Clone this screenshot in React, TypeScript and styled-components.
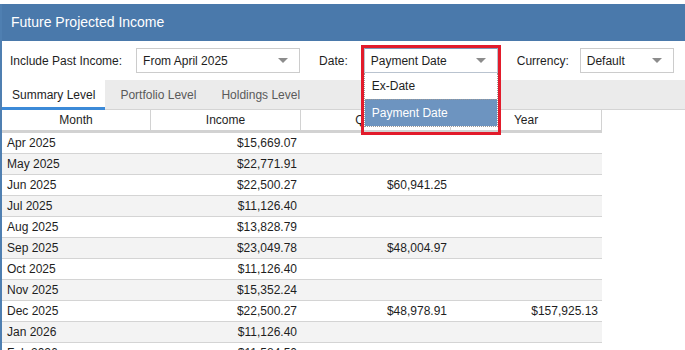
import React from 'react';
import styled, { createGlobalStyle } from 'styled-components';

const GlobalStyle = createGlobalStyle`
  html, body {
    margin: 0;
    padding: 0;
    background: #ffffff;
  }
  body {
    font-family: "Liberation Sans", Arial, sans-serif;
    font-size: 12px;
    color: #1e1e1e;
  }
`;

const Panel = styled.div`
  margin-top: 4px;
  border-left: 2px solid #4f7fb1;
  height: 346px;
  overflow: hidden;
`;

const Header = styled.div`
  height: 37px;
  line-height: 37px;
  background: #4a79ab;
  color: #ffffff;
  font-size: 14px;
  margin-left: -2px;
  padding-left: 11px;
`;

const FilterBar = styled.div`
  display: flex;
  align-items: center;
  height: 39px;
  padding-left: 8px;
`;

const Label = styled.span<{ $gap: number }>`
  margin-right: ${(p) => p.$gap}px;
  white-space: nowrap;
`;

const SelectBox = styled.div<{ $width: number; $open?: boolean; $after: number }>`
  position: relative;
  box-sizing: border-box;
  display: flex;
  align-items: center;
  justify-content: space-between;
  width: ${(p) => p.$width}px;
  height: 25px;
  padding: 0 11px 0 6px;
  margin-right: ${(p) => p.$after}px;
  border: 1px solid ${(p) => (p.$open ? '#b9c3cf' : '#cccccc')};
  border-top-color: ${(p) => (p.$open ? '#7f99b8' : '#cccccc')};
  background: #ffffff;
  z-index: ${(p) => (p.$open ? 5 : 1)};
`;

const Caret = styled.span`
  width: 0;
  height: 0;
  border-left: 5px solid transparent;
  border-right: 5px solid transparent;
  border-top: 5px solid #8c8c8c;
`;

const DropList = styled.div`
  position: absolute;
  top: calc(100% + 1px);
  left: -1px;
  right: -1px;
  border: 1px dotted #9a9a9a;
  border-top: none;
  background: #ffffff;
`;

const DropItem = styled.div<{ $selected?: boolean }>`
  height: 26px;
  line-height: 26px;
  padding-left: 7px;
  background: ${(p) => (p.$selected ? '#6d94c0' : '#ffffff')};
  color: ${(p) => (p.$selected ? '#ffffff' : '#1e1e1e')};
  border-top: ${(p) => (p.$selected ? '1px dotted #9a9a9a' : 'none')};
`;

const Highlight = styled.div`
  position: absolute;
  left: -4px;
  right: -4px;
  top: -4px;
  height: 84px;
  border: 3px solid #e21b2b;
  pointer-events: none;
`;

const TabBar = styled.div`
  display: flex;
  gap: 5px;
  height: 30px;
  background: #ebebeb;
  border-bottom: 1px solid #d4d4d4;
  box-sizing: border-box;
`;

const Tab = styled.div<{ $active?: boolean }>`
  display: flex;
  align-items: center;
  padding: 0 10px;
  box-sizing: border-box;
  height: ${(p) => (p.$active ? '30px' : '29px')};
  background: ${(p) => (p.$active ? '#ffffff' : 'transparent')};
  color: ${(p) => (p.$active ? '#1e1e1e' : '#5a5a5a')};
  border-bottom: ${(p) => (p.$active ? '3px solid #3c8ad8' : 'none')};
  padding-top: ${(p) => (p.$active ? '2px' : '0')};
`;

const Table = styled.div`
  width: 600px;
`;

const HeadRow = styled.div`
  display: grid;
  grid-template-columns: 149px 150px 150px 151px;
  height: 20px;
  border-bottom: 3px solid #d2d2d2;
`;

const HeadCell = styled.div`
  display: flex;
  align-items: center;
  justify-content: center;
  border-right: 1px solid #d2d2d2;
`;

const Row = styled.div<{ $alt: boolean }>`
  display: grid;
  grid-template-columns: 149px 150px 150px 151px;
  height: 20px;
  border-bottom: 1px solid #d4d4d4;
  background: ${(p) => (p.$alt ? '#f3f3f3' : '#ffffff')};
`;

const Cell = styled.div<{ $align: 'left' | 'right' }>`
  display: flex;
  align-items: center;
  justify-content: ${(p) => (p.$align === 'left' ? 'flex-start' : 'flex-end')};
  padding: ${(p) => (p.$align === 'left' ? '0 0 0 5px' : '0 4px 0 0')};
`;

interface IncomeRow {
  month: string;
  income: string;
  quarter?: string;
  year?: string;
}

const rows: IncomeRow[] = [
  { month: 'Apr 2025', income: '$15,669.07' },
  { month: 'May 2025', income: '$22,771.91' },
  { month: 'Jun 2025', income: '$22,500.27', quarter: '$60,941.25' },
  { month: 'Jul 2025', income: '$11,126.40' },
  { month: 'Aug 2025', income: '$13,828.79' },
  { month: 'Sep 2025', income: '$23,049.78', quarter: '$48,004.97' },
  { month: 'Oct 2025', income: '$11,126.40' },
  { month: 'Nov 2025', income: '$15,352.24' },
  { month: 'Dec 2025', income: '$22,500.27', quarter: '$48,978.91', year: '$157,925.13' },
  { month: 'Jan 2026', income: '$11,126.40' },
  { month: 'Feb 2026', income: '$11,584.50' },
];

const App: React.FC = () => {
  return (
    <>
      <GlobalStyle />
      <Panel>
        <Header>Future Projected Income</Header>

        <FilterBar>
          <Label $gap={14}>Include Past Income:</Label>
          <SelectBox $width={164} $after={19}>
            <span>From April 2025</span>
            <Caret />
          </SelectBox>

          <Label $gap={16}>Date:</Label>
          <SelectBox $width={134} $after={19} $open>
            <span>Payment Date</span>
            <Caret />
            <DropList>
              <DropItem>Ex-Date</DropItem>
              <DropItem $selected>Payment Date</DropItem>
            </DropList>
            <Highlight />
          </SelectBox>

          <Label $gap={11}>Currency:</Label>
          <SelectBox $width={94} $after={0}>
            <span>Default</span>
            <Caret />
          </SelectBox>
        </FilterBar>

        <TabBar>
          <Tab $active>Summary Level</Tab>
          <Tab>Portfolio Level</Tab>
          <Tab>Holdings Level</Tab>
        </TabBar>

        <Table>
          <HeadRow>
            <HeadCell>Month</HeadCell>
            <HeadCell>Income</HeadCell>
            <HeadCell>Quarter</HeadCell>
            <HeadCell>Year</HeadCell>
          </HeadRow>
          {rows.map((r, i) => (
            <Row key={r.month} $alt={i % 2 === 1}>
              <Cell $align="left">{r.month}</Cell>
              <Cell $align="right">{r.income}</Cell>
              <Cell $align="right">{r.quarter ?? ''}</Cell>
              <Cell $align="right">{r.year ?? ''}</Cell>
            </Row>
          ))}
        </Table>
      </Panel>
    </>
  );
};

export default App;
